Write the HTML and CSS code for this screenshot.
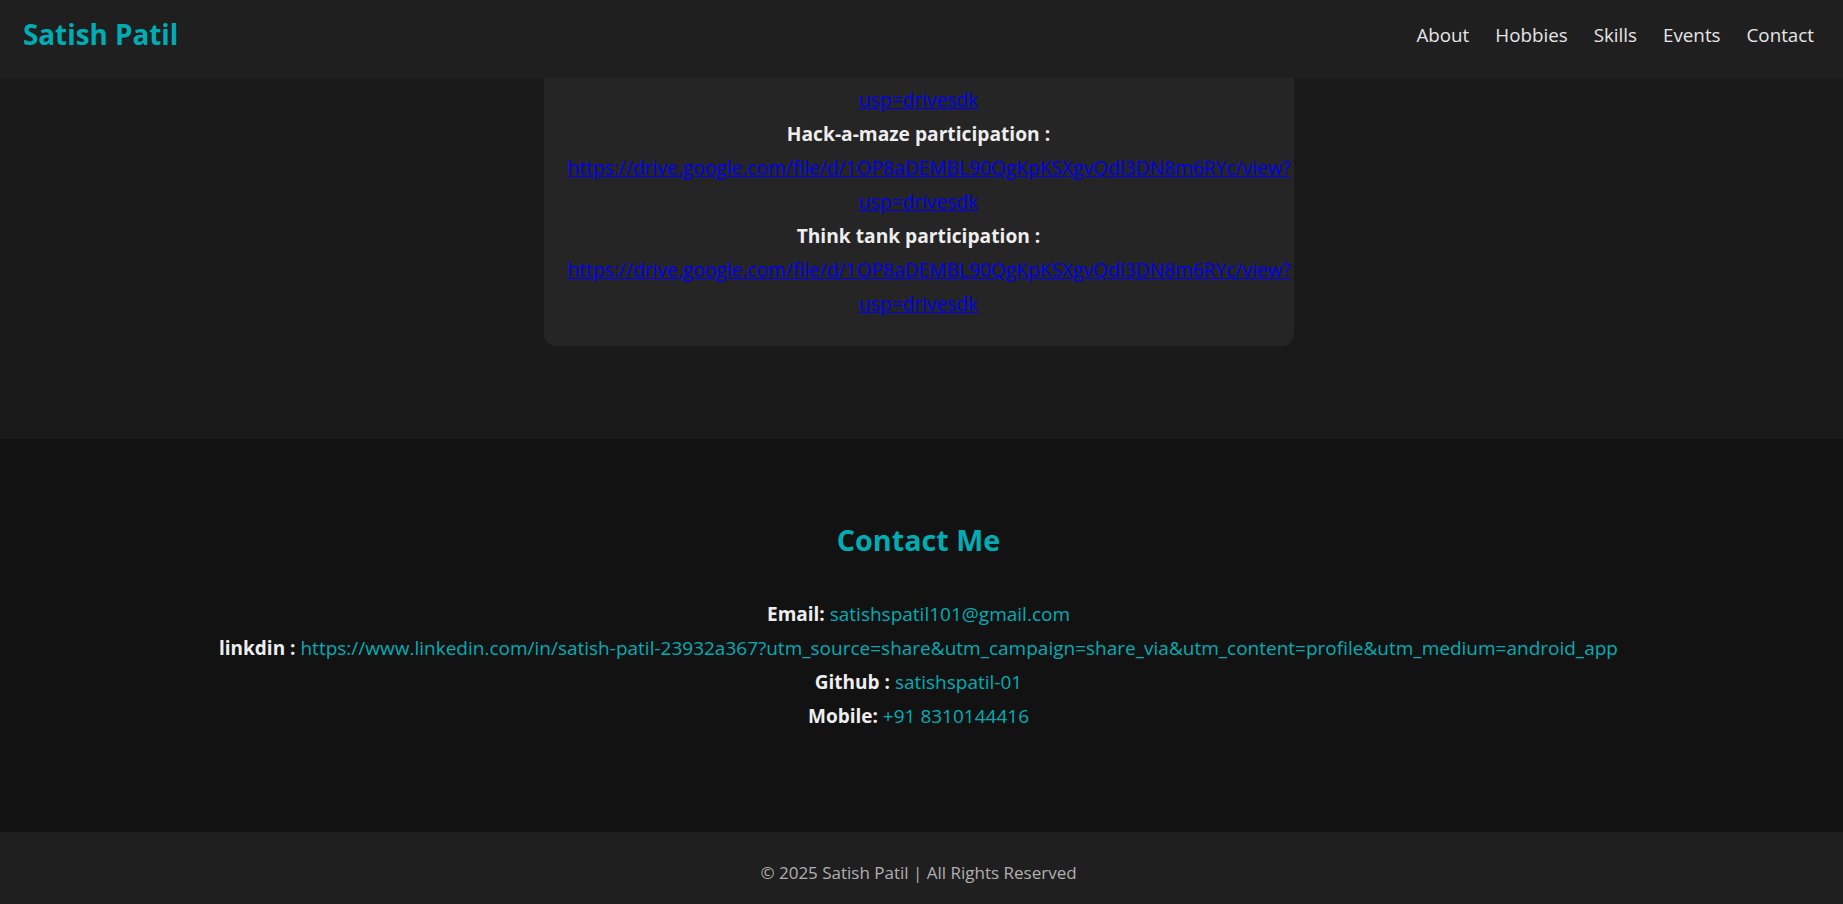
FILE: index.html
```html
<!DOCTYPE html>
<html lang="en">
<head>
<meta charset="utf-8">
<title>Satish Patil</title>
<link rel="stylesheet" href="styles.css">
</head>
<body>
<header class="site-header">
  <div class="logo">Satish Patil</div>
  <nav class="nav">
    <a href="#about">About</a>
    <a href="#hobbies">Hobbies</a>
    <a href="#skills">Skills</a>
    <a href="#events">Events</a>
    <a href="#contact">Contact</a>
  </nav>
</header>

<section class="events" id="events">
  <div class="card">
    <a class="doc-link" href="https://drive.google.com/file/d/1OP8aDEMBL90QgKpKSXgvQdl3DN8m6RYc/view?usp=drivesdk">usp=drivesdk</a><br>
    <strong class="label">Hack-a-maze participation :</strong><br>
    <a class="doc-link" href="https://drive.google.com/file/d/1OP8aDEMBL90QgKpKSXgvQdl3DN8m6RYc/view?usp=drivesdk">https://drive.google.com/file/d/1OP8aDEMBL90QgKpKSXgvQdl3DN8m6RYc/view?usp=drivesdk</a><br>
    <strong class="label">Think tank participation :</strong><br>
    <a class="doc-link" href="https://drive.google.com/file/d/1OP8aDEMBL90QgKpKSXgvQdl3DN8m6RYc/view?usp=drivesdk">https://drive.google.com/file/d/1OP8aDEMBL90QgKpKSXgvQdl3DN8m6RYc/view?usp=drivesdk</a>
  </div>
</section>

<section class="contact" id="contact">
  <h2 class="contact-title">Contact Me</h2>
  <p class="contact-info">
    <strong>Email:</strong> <a href="mailto:satishspatil101@gmail.com">satishspatil101@gmail.com</a><br>
    <strong>linkdin :</strong> <a href="https://www.linkedin.com/in/satish-patil-23932a367?utm_source=share&amp;utm_campaign=share_via&amp;utm_content=profile&amp;utm_medium=android_app">https://www.linkedin.com/in/satish-patil-23932a367?utm_source=share&amp;utm_campaign=share_via&amp;utm_content=profile&amp;utm_medium=android_app</a><br>
    <strong>Github :</strong> <a href="https://github.com/satishspatil-01">satishspatil-01</a><br>
    <strong>Mobile:</strong> <a href="tel:+918310144416">+91 8310144416</a>
  </p>
</section>

<footer class="site-footer">
  <p>© 2025 Satish Patil | All Rights Reserved</p>
</footer>
</body>
</html>
```
FILE: styles.css
```css
* { box-sizing: border-box; }

html, body {
  margin: 0;
  padding: 0;
}

body {
  background: #1a1a1a;
  color: #eeeeee;
  font-family: "Open Sans", "Noto Sans", sans-serif;
  font-size: 19px;
}

.site-header {
  height: 78px;
  background: #1f1f1f;
  display: flex;
  justify-content: space-between;
  align-items: center;
  padding: 0 29px 9px 23px;
}

.logo {
  color: #00adb5;
  font-size: 27.8px;
  font-weight: 700;
  margin-bottom: 1px;
}

.nav {
  display: flex;
  gap: 26px;
}

.nav a {
  color: #e6e6e6;
  text-decoration: none;
  font-size: 18.8px;
}

.events {
  background: #1a1a1a;
  padding: 0 6px 93px 0;
}

.card {
  width: 750px;
  margin: 0 auto;
  background: #252525;
  border-radius: 0 0 12px 12px;
  padding: 5px 24px 25px;
  text-align: center;
  line-height: 34px;
  font-size: 19.2px;
}

.card .label {
  color: #eeeeee;
}

.doc-link {
  color: #0000ee;
}

.contact {
  background: #121212;
  padding: 81px 26px 99px 20px;
  text-align: center;
}

.contact-title {
  color: #00adb5;
  font-size: 28.7px;
  line-height: 40px;
  margin: 0 0 37px;
}

.contact-info {
  margin: 0;
  line-height: 34px;
}

.contact-info a {
  color: #00adb5;
  text-decoration: none;
}

.site-footer {
  background: #1f1f1f;
  height: 73px;
  padding: 24px 6px 0 0;
  text-align: center;
  color: #b0b0b0;
  font-size: 17px;
}

.site-footer p {
  margin: 0;
  line-height: 34px;
}
```
